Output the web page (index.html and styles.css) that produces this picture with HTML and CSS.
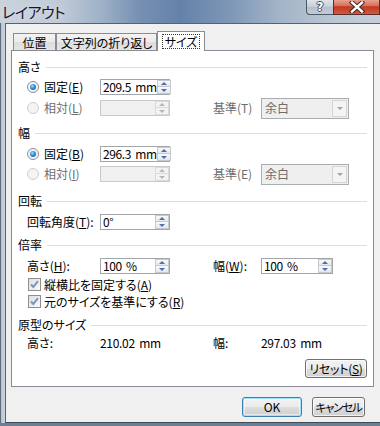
FILE: index.html
```html
<!DOCTYPE html>
<html lang="ja">
<head>
<meta charset="utf-8">
<title>レイアウト</title>
<link rel="stylesheet" href="styles.css">
</head>
<body>
<div class="window">
  <div class="titlebar">
    <span class="title">レイアウト</span>
    <div class="caption-btns">
      <span class="cb help">?</span>
      <span class="cb close">
        <svg width="16" height="12" viewBox="0 0 16 12"><path d="M3 1.5 L13 10.5 M13 1.5 L3 10.5" stroke="#3b2a2a" stroke-width="4.4" stroke-linecap="square"/><path d="M3 1.5 L13 10.5 M13 1.5 L3 10.5" stroke="#fff" stroke-width="2.4" stroke-linecap="square"/></svg>
      </span>
    </div>
  </div>
  <div class="framebody">
    <div class="leftframe"></div>
    <div class="client">
      <div class="tabs">
        <div class="tab t1">位置</div>
        <div class="tab t2">文字列の折り返し</div>
        <div class="tab active"><span class="focus">サイズ</span></div>
      </div>
      <div class="panel">
        <div class="group g1"><span>高さ</span></div>
        <div class="row r1">
          <label class="c1"><span class="radio on"></span>固定(<u>E</u>)</label>
          <div class="edit"><span class="val">209.5 mm</span><span class="spin"><i class="up"></i><i class="dn"></i></span></div>
        </div>
        <div class="row r2">
          <label class="c1 dis"><span class="radio off"></span>相対(<u>L</u>)</label>
          <div class="edit disabled"><span class="val"></span><span class="spin off"><i class="up"></i><i class="dn"></i></span></div>
          <span class="c2 dis">基準(T)</span>
          <div class="combo"><span class="ctext">余白</span><span class="drop"></span></div>
        </div>

        <div class="group g2"><span>幅</span></div>
        <div class="row r3">
          <label class="c1"><span class="radio on"></span>固定(<u>B</u>)</label>
          <div class="edit"><span class="val">296.3 mm</span><span class="spin"><i class="up"></i><i class="dn"></i></span></div>
        </div>
        <div class="row r4">
          <label class="c1 dis"><span class="radio off"></span>相対(<u>I</u>)</label>
          <div class="edit disabled"><span class="val"></span><span class="spin off"><i class="up"></i><i class="dn"></i></span></div>
          <span class="c2 dis">基準(E)</span>
          <div class="combo"><span class="ctext">余白</span><span class="drop"></span></div>
        </div>

        <div class="group g3"><span>回転</span></div>
        <div class="row r5">
          <label class="c1">回転角度(<u>T</u>):</label>
          <div class="edit"><span class="val">0°</span><span class="spin"><i class="up"></i><i class="dn"></i></span></div>
        </div>

        <div class="group g4"><span>倍率</span></div>
        <div class="row r6">
          <label class="c1">高さ(<u>H</u>):</label>
          <div class="edit"><span class="val">100 %</span><span class="spin"><i class="up"></i><i class="dn"></i></span></div>
          <span class="c2">幅(<u>W</u>):</span>
          <div class="edit wide"><span class="val">100 %</span><span class="spin"><i class="up"></i><i class="dn"></i></span></div>
        </div>
        <div class="row crow c-a">
          <span class="check"><svg width="11" height="11" viewBox="0 0 11 11"><path d="M2 5.5 L4.3 8 L9 2.2" fill="none" stroke="#7d95bd" stroke-width="2"/></svg></span>
          <span>縦横比を固定する(<u>A</u>)</span>
        </div>
        <div class="row crow c-b">
          <span class="check"><svg width="11" height="11" viewBox="0 0 11 11"><path d="M2 5.5 L4.3 8 L9 2.2" fill="none" stroke="#7d95bd" stroke-width="2"/></svg></span>
          <span>元のサイズを基準にする(<u>R</u>)</span>
        </div>

        <div class="group g5"><span>原型のサイズ</span></div>
        <div class="row r7">
          <span class="c1">高さ:</span>
          <span class="orig">210.02 mm</span>
          <span class="c2">幅:</span>
          <span class="orig">297.03 mm</span>
        </div>
        <div class="resetrow">
          <span class="btn reset">リセット(<u>S</u>)</span>
        </div>
      </div>
      <div class="buttons">
        <span class="btn ok">OK</span>
        <span class="btn cancel">キャンセル</span>
      </div>
    </div>
  </div>
  <div class="bottomframe"></div>
</div>
</body>
</html>
```
FILE: styles.css
```css
* { box-sizing: border-box; }
html, body { margin: 0; padding: 0; }
body {
  width: 380px;
  height: 426px;
  overflow: hidden;
  font-family: "Noto Sans CJK JP", "Liberation Sans", sans-serif;
  font-size: 12px;
  line-height: 14px;
  color: #000;
  font-feature-settings: "palt";
  background: #9fb0c3;
}
u { text-decoration: underline; text-underline-offset: 1px; }

.window {
  width: 380px;
  height: 426px;
  display: flex;
  flex-direction: column;
  background: linear-gradient(90deg, #c9d3dd 0, #c0cbd7 60px, #9fb2c8 100px, #7690b2 140px, #6482a9 180px, #7e97b7 230px, #a3b4c8 280px, #b9c6d3 330px, #c3ced9 380px);
}

/* title bar */
.titlebar {
  height: 23px;
  display: flex;
  align-items: flex-start;
  flex: none;
}
.title {
  font-size: 15px;
  line-height: 18px;
  margin: 3px 0 0 2px;
  letter-spacing: -0.5px;
  color: #1c1230;
  text-shadow: 0 0 6px rgba(255,255,255,0.6);
}
.caption-btns {
  margin-left: auto;
  display: flex;
  height: 15px;
  margin-top: -1px;
}
.cb {
  height: 16px;
  display: flex;
  align-items: center;
  justify-content: center;
  border: 1px solid #4e5866;
  border-top: none;
}
.help {
  width: 27px;
  border-radius: 0 0 0 4px;
  background: linear-gradient(#e2e7ec, #c7d0da 50%, #b4bfcc 51%, #c3ccd6);
  color: #fff;
  font-family: "DejaVu Sans", sans-serif;
  font-weight: bold;
  font-size: 12px;
  text-shadow: 1px 0 #444c58, -1px 0 #444c58, 0 1px #444c58, 0 -1px #444c58;
  border-right: none;
}
.close {
  width: 47px;
  background: linear-gradient(#e9a99a, #d66f5b 45%, #c2391f 52%, #d25a3e);
  border-color: #5a2e2a;
}

/* frame */
.framebody {
  flex: 1;
  display: flex;
  min-height: 0;
}
.leftframe {
  width: 5px;
  flex: none;
  background: linear-gradient(90deg, #5f6d7c 0, #5f6d7c 1px, #b7c3cf 1px, #c8d1da 4px);
}
.bottomframe {
  height: 3px;
  flex: none;
  background: #6d7f94;
}
.client {
  flex: 1;
  background: #f0f0f0;
  border-top: 1px solid #55626f;
  border-left: 1px solid #55626f;
  border-bottom: 1px solid #3f4a56;
  padding: 7px 0 0 5px;
}

/* tabs */
.tabs {
  display: flex;
  align-items: flex-end;
  height: 19px;
  padding-left: 2px;
  position: relative;
  z-index: 1;
}
.tab {
  height: 17px;
  border: 1px solid #898c95;
  border-bottom: none;
  background: linear-gradient(#f3f3f3, #ebebeb 50%, #dddddd 51%, #e5e5e5);
  display: flex;
  align-items: center;
  justify-content: center;
  padding-top: 1px;
  white-space: nowrap;
}
.t1 { width: 43px; }
.t2 { width: 101px; }
.tab.active {
  width: 48px;
  height: 20px;
  margin-bottom: -1px;
  background: #fff;
  padding-top: 0;
}
.focus {
  outline: 1px dotted #333;
  outline-offset: 0;
  padding: 0 2px;
  line-height: 13px;
}

/* panel */
.panel {
  width: 363px;
  height: 337px;
  background: #fff;
  border: 1px solid #898c95;
  padding: 8px 6px 0 6px;
}
.group {
  height: 16px;
  display: flex;
  align-items: center;
}
.group::after {
  content: "";
  flex: 1;
  height: 1px;
  background: #d5dfe5;
  margin-left: 5px;
}
.g2 { margin-top: 7px; }
.g3 { margin-top: 9px; }
.g4 { margin-top: 5px; }
.g5 { margin-top: 7px; }

.row {
  height: 20px;
  display: flex;
  align-items: center;
  padding-left: 9px;
  white-space: nowrap;
}
.r1 { margin-top: 2px; }
.r2 { margin-top: 1px; }
.r3 { margin-top: 3px; }
.r5 { margin-top: 3px; }
.r6 { margin-top: 3px; }
.crow { height: 17px; }
.r7 { margin-top: 2px; height: 16px; }

.c1 {
  width: 73px;
  flex: none;
  display: flex;
  align-items: center;
}
.c2 {
  width: 48px;
  margin-left: 43px;
  flex: none;
}
.dis { color: #6d6d6d; }

.radio {
  width: 12px;
  height: 12px;
  border-radius: 50%;
  border: 1px solid #8e8f8f;
  background: radial-gradient(circle at 50% 50%, #ffffff 0, #ececec 100%);
  margin-right: 5px;
  position: relative;
  flex: none;
}
.radio.on::after {
  content: "";
  position: absolute;
  left: 2px;
  top: 2px;
  width: 6px;
  height: 6px;
  border-radius: 50%;
  background: radial-gradient(circle at 40% 35%, #a6dcff 0, #2f8ddc 45%, #0d4f9e 100%);
}
.radio.off {
  border-color: #cfcfcf;
  background: #f4f4f4;
}

.edit {
  width: 70px;
  height: 16px;
  flex: none;
  border: 1px solid #a3a6ab;
  background: #fff;
  display: flex;
  align-items: center;
}
.edit.wide { width: 72px; }
.edit.disabled {
  background: #f0f0f0;
  border-color: #c9c9c9;
}
.val {
  padding-left: 2px;
  flex: 1;
  white-space: nowrap;
  letter-spacing: -0.4px;
  word-spacing: 2px;
}
.spin {
  width: 14px;
  height: 14px;
  display: flex;
  flex-direction: column;
  flex: none;
}
.spin i {
  height: 7px;
  background: linear-gradient(#f8f9fa, #e5e8ec);
  border: 1px solid #c5cad0;
  display: flex;
  align-items: center;
  justify-content: center;
}
.spin i.dn { border-top: none; }
.spin i::after {
  content: "";
  width: 0;
  height: 0;
  border-left: 3px solid transparent;
  border-right: 3px solid transparent;
}
.spin i.up::after { border-bottom: 3px solid #4c6db2; }
.spin i.dn::after { border-top: 3px solid #4c6db2; }
.spin.off i { background: #f3f3f3; border-color: #dadada; }
.spin.off i.up::after { border-bottom-color: #b5b5b5; }
.spin.off i.dn::after { border-top-color: #b5b5b5; }

.combo {
  width: 88px;
  height: 21px;
  flex: none;
  border: 1px solid #a9acb0;
  background: #efefef;
  display: flex;
  align-items: center;
  padding: 1px;
}
.ctext {
  flex: 1;
  padding-left: 2px;
  color: #6d6d6d;
}
.drop {
  width: 15px;
  height: 17px;
  border: 1px solid #d4d4d4;
  background: #f4f4f4;
  display: flex;
  align-items: center;
  justify-content: center;
}
.drop::after {
  content: "";
  border-left: 3px solid transparent;
  border-right: 3px solid transparent;
  border-top: 3px solid #a4a4a4;
}

.check {
  width: 13px;
  height: 13px;
  border: 1px solid #8f8f8f;
  background: linear-gradient(135deg, #dedede, #fafafa);
  margin-right: 3px;
  margin-left: 1px;
  display: flex;
  align-items: center;
  justify-content: center;
  flex: none;
}

.orig {
  width: 70px;
  flex: none;
  letter-spacing: -0.3px;
  word-spacing: 2px;
}

.resetrow {
  display: flex;
  justify-content: flex-end;
  margin-top: 8px;
}

.btn {
  height: 20px;
  display: flex;
  align-items: center;
  justify-content: center;
  border: 1px solid #707070;
  border-radius: 3px;
  background: linear-gradient(#f2f2f2, #ebebeb 50%, #dddddd 51%, #cfcfcf);
  box-shadow: inset 0 0 0 1px rgba(255,255,255,0.7);
  white-space: nowrap;
}
.reset { width: 62px; height: 19px; letter-spacing: -0.3px; }

.buttons {
  display: flex;
  gap: 10px;
  margin-top: 10px;
  padding-left: 231px;
}
.ok {
  width: 60px;
  border-color: #3c7fb1;
  box-shadow: inset 0 0 0 1px #9fe0fb, inset 0 0 0 2px rgba(255,255,255,0.5);
}
.cancel { width: 53px; letter-spacing: -1.2px; font-size: 11.5px; }
```
